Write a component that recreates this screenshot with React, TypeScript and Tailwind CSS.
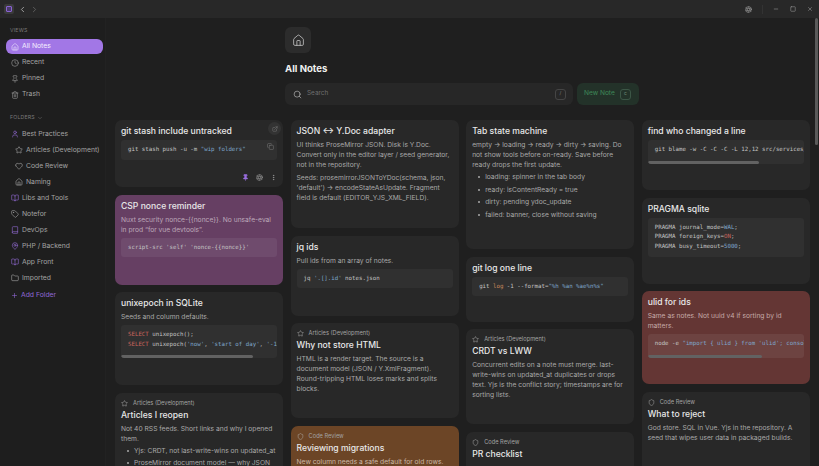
import type { ReactNode } from "react";
import {
  Home, Clock, Pin, Trash2, ChevronDown, ChevronLeft, ChevronRight, User, Star, Heart, BookOpen, Tag, Book, MapPin,
  Folder, Plus, Search, Aperture, Minus, Square, X, ExternalLink, Copy, MoreVertical, Shield,
} from "lucide-react";

const views = [
  { label: "Recent", icon: Clock },
  { label: "Pinned", icon: Pin },
  { label: "Trash", icon: Trash2 },
];

const folders = [
  { label: "Best Practices", icon: User, purple: true },
  { label: "Articles (Development)", icon: Star, sub: true },
  { label: "Code Review", icon: Heart, sub: true },
  { label: "Naming", icon: Home, sub: true },
  { label: "Libs and Tools", icon: BookOpen, purple: true },
  { label: "Notefor", icon: Tag },
  { label: "DevOps", icon: Book, purple: true },
  { label: "PHP / Backend", icon: MapPin, purple: true },
  { label: "App Front", icon: BookOpen, purple: true },
  { label: "Imported", icon: Folder },
];

function Card({ h, tone = "bg-[#282828]", tag, title, children }: { h: string; tone?: string; tag?: "articles" | "review"; title: string; children?: ReactNode }) {
  const TagIcon = tag === "articles" ? Star : Shield;
  return (
    <div className={`relative shrink-0 overflow-hidden rounded-[7px] px-[6px] pt-[5px] ${h} ${tone}`}>
      {tag && (
        <div className="mb-[1px] mt-[1px] flex h-[9px] items-center gap-[4px] text-[5.7px] text-[#a3a3a3]">
          <TagIcon size={7} strokeWidth={1.6} className="text-[#bdbdbd]" />
          <span className="ml-[1px]">{tag === "articles" ? "Articles (Development)" : "Code Review"}</span>
        </div>
      )}
      <h3 className="text-[8.6px] font-medium leading-[12px] text-[#e8e8e8]">{title}</h3>
      {children}
    </div>
  );
}

function Body({ children, dim = "text-[#a8a8a8]" }: { children: ReactNode; dim?: string }) {
  return <p className={`mt-[3px] text-[6.7px] leading-[10px] ${dim}`}>{children}</p>;
}

function Code({ lines, bg = "bg-[#303030]", thumb, h = "" }: { lines: ReactNode[]; bg?: string; thumb?: string; h?: string }) {
  return (
    <div className={`relative mt-[3px] overflow-hidden whitespace-pre rounded-[3px] py-[5px] pl-[7px] font-['DejaVu_Sans_Mono',monospace] text-[5.75px] leading-[9.7px] text-[#c4c4c4] ${bg} ${h}`}>
      {lines.map((l, i) => (
        <div key={i}>{l}</div>
      ))}
      {thumb && <div className={`absolute bottom-0 left-0 h-[3px] rounded-full bg-[#626262] ${thumb}`} />}
    </div>
  );
}

const S = ({ children }: { children: ReactNode }) => <span className="text-[#7fa7cc]">{children}</span>;
const R = ({ children }: { children: ReactNode }) => <span className="text-[#c9645c]">{children}</span>;

function Bullets({ items }: { items: string[] }) {
  return (
    <ul className="mt-[1px] pl-[6px] text-[6.7px] text-[#a8a8a8]">
      {items.map((t) => (
        <li key={t} className="flex h-[12.6px] items-center">
          <span className="mr-[5px] h-[2px] w-[2px] rounded-full bg-[#a8a8a8]" />
          {t}
        </li>
      ))}
    </ul>
  );
}

export default function App() {
  return (
    <div className="flex h-[466px] w-[819px] flex-col overflow-hidden bg-[#1f1f1f] font-['Inter',sans-serif]">
      {/* Title bar */}
      <div className="flex h-[18px] shrink-0 items-center bg-[#282828] text-[#a5a5a5]">
        <div className="ml-[4px] flex h-[10px] w-[10px] items-center justify-center rounded-[2px] bg-[#3a3a3a]">
          <div className="h-[6px] w-[6px] rounded-[1px] border border-[#8a63d2] bg-[#4a3a6b]" />
        </div>
        <ChevronLeft size={9} strokeWidth={2} className="ml-[4px] text-[#bdbdbd]" />
        <ChevronRight size={9} strokeWidth={2} className="ml-[3px] text-[#6b6b6b]" />
        <div className="ml-auto flex items-center">
          <Aperture size={7} strokeWidth={1.8} />
          <div className="ml-[10px] h-[9px] w-px bg-[#333333]" />
          <Minus size={6} strokeWidth={2} className="ml-[10px]" />
          <Square size={6} strokeWidth={2} className="ml-[11px]" />
          <X size={6} strokeWidth={2} className="ml-[11px] mr-[6px]" />
        </div>
      </div>

      <div className="flex min-h-0 flex-1">
        {/* Sidebar */}
        <aside className="w-[106px] shrink-0 border-r border-[#222222] bg-[#1e1e1e] pl-[6px] pr-[2px] pt-[9px]">
          <div className="pl-[4px] text-[5.2px] leading-[7px] tracking-[0.2px] text-[#7a7a7a]">VIEWS</div>
          <div className="mt-[5px] flex h-[15px] items-center rounded-[6px] bg-[#a277e6] pl-[5px] text-[6.8px] text-[#f5f0ff]">
            <Home size={8} strokeWidth={1.7} className="mr-[3px]" />
            All Notes
          </div>
          {views.map((v) => (
            <div key={v.label} className="mt-px flex h-[15px] items-center pl-[5px] text-[6.8px] text-[#a3a3a3]">
              <v.icon size={8} strokeWidth={1.7} className="mr-[3px]" />
              {v.label}
            </div>
          ))}
          <div className="mt-[12px] flex h-[7px] items-center pl-[4px] text-[5.2px] tracking-[0.2px] text-[#7a7a7a]">
            FOLDERS
            <ChevronDown size={6} strokeWidth={1.8} className="ml-[2px]" />
          </div>
          <div className="mt-[5px]">
            {folders.map((f) => (
              <div key={f.label} className={`flex h-[16px] items-center text-[6.8px] text-[#a3a3a3] ${f.sub ? "pl-[9px]" : "pl-[5px]"}`}>
                <f.icon size={8} strokeWidth={1.7} className={`mr-[3px] ${f.purple ? "text-[#9a6fdf]" : "text-[#b0b0b0]"}`} />
                {f.label}
              </div>
            ))}
          </div>
          <div className="mt-[1px] flex h-[16px] items-center pl-[5px] text-[6.8px] text-[#9068d6]">
            <Plus size={7} strokeWidth={2} className="mr-[3px]" />
            Add Folder
          </div>
        </aside>

        {/* Main */}
        <main className="relative min-w-0 flex-1">
          <div className="pl-[179px] pt-[9px]">
            <div className="flex h-[26px] w-[26px] items-center justify-center rounded-[6px] bg-[#2c2c2c] text-[#c4c4c4]">
              <Home size={13} strokeWidth={1.5} />
            </div>
            <h1 className="mt-[9px] text-[9.6px] font-bold leading-[13px] text-[#f0f0f0]">All Notes</h1>
            <div className="mt-[8px] flex gap-[4px]">
              <div className="flex h-[22px] w-[288px] items-center rounded-[6px] bg-[#272727] pl-[8px] pr-[7px]">
                <Search size={9} strokeWidth={1.8} className="text-[#b5b5b5]" />
                <span className="ml-[5px] text-[6.4px] text-[#6f6f6f]">Search</span>
                <span className="ml-auto flex h-[11px] w-[11px] items-center justify-center rounded-[3px] border border-[#454545] text-[5px] text-[#7a7a7a]">/</span>
              </div>
              <div className="flex h-[22px] w-[62px] items-center rounded-[6px] bg-[#233229] pl-[7px] text-[6.6px] text-[#3e8a58]">
                New Note
                <span className="ml-[5px] flex h-[11px] w-[11px] items-center justify-center rounded-[3px] border border-[#3c5646] text-[5px] text-[#6d8a76]">c</span>
              </div>
            </div>
          </div>

          <div className="mt-[15px] grid grid-cols-4 gap-x-[7.3px] pl-[9px] pr-[9px]">
            <div className="flex flex-col gap-[7.5px]">
              <Card h="h-[67px]" title="git stash include untracked">
                <div className="absolute right-[2px] top-[2px] flex h-[13px] w-[13px] items-center justify-center rounded-full bg-[#333333]">
                  <ExternalLink size={6} strokeWidth={1.6} className="text-[#8a8a8a]" />
                </div>
                <Code lines={[<>git stash push -u -m <S>"wip folders"</S></>]} />
                <Copy size={7} strokeWidth={1.5} className="absolute right-[9px] top-[23px] text-[#8a8a8a]" />
                <div className="absolute bottom-[6px] right-[6px] flex items-center text-[#a8a8a8]">
                  <Pin size={7} strokeWidth={2} className="fill-[#9a6fdf] text-[#9a6fdf]" />
                  <Aperture size={7} strokeWidth={1.6} className="ml-[7px]" />
                  <MoreVertical size={7} strokeWidth={2} className="ml-[7px]" />
                </div>
              </Card>
              <Card h="h-[90px]" tone="bg-[#663f63]" title="CSP nonce reminder">
                <Body dim="text-[#bda9ba]">Nuxt security nonce-{"{{nonce}}"}. No unsafe-eval in prod “for vue devtools”.</Body>
                <Code bg="bg-[#6f4b6d]" lines={["script-src 'self' 'nonce-{{nonce}}'"]} />
              </Card>
              <Card h="h-[93px]" title="unixepoch in SQLite">
                <Body>Seeds and column defaults.</Body>
                <Code
                  h="h-[33px]"
                  thumb="w-[132px]"
                  lines={[
                    <><R>SELECT</R> unixepoch();</>,
                    <><R>SELECT</R> unixepoch(<S>'now'</S>, <S>'start of day'</S>, <S>'-1 day'</S>);</>,
                  ]}
                />
              </Card>
              <Card h="h-[120px]" tag="articles" title="Articles I reopen">
                <Body>Not 40 RSS feeds. Short links and why I opened them.</Body>
                <Bullets items={["Yjs: CRDT, not last-write-wins on updated_at", "ProseMirror document model — why JSON"]} />
              </Card>
            </div>

            <div className="flex flex-col gap-[7.5px]">
              <Card h="h-[108px]" title="JSON ↔ Y.Doc adapter">
                <Body>UI thinks ProseMirror JSON. Disk is Y.Doc. Convert only in the editor layer / seed generator, not in the repository.</Body>
                <Body>Seeds: prosemirrorJSONToYDoc(schema, json, 'default') → encodeStateAsUpdate. Fragment field is default (EDITOR_YJS_XML_FIELD).</Body>
              </Card>
              <Card h="h-[80px]" title="jq ids">
                <Body>Pull ids from an array of notes.</Body>
                <Code lines={[<>jq <S>'.[].id'</S> notes.json</>]} />
              </Card>
              <Card h="h-[95px]" tag="articles" title="Why not store HTML">
                <Body>HTML is a render target. The source is a document model (JSON / Y.XmlFragment). Round-tripping HTML loses marks and splits blocks.</Body>
              </Card>
              <Card h="h-[60px]" tone="bg-[#6c4526]" tag="review" title="Reviewing migrations">
                <Body dim="text-[#cbb8a6]">New column needs a safe default for old rows. No</Body>
              </Card>
            </div>

            <div className="flex flex-col gap-[7.5px]">
              <Card h="h-[129px]" title="Tab state machine">
                <Body>empty → loading → ready → dirty → saving. Do not show tools before on-ready. Save before ready drops the first update.</Body>
                <Bullets items={["loading: spinner in the tab body", "ready: isContentReady = true", "dirty: pending ydoc_update", "failed: banner, close without saving"]} />
              </Card>
              <Card h="h-[65px]" title="git log one line">
                <Code lines={[<>git <span className="text-[#c98a5c]">log</span> -1 --format=<S>"%h %an %ae%n%s"</S></>]} />
              </Card>
              <Card h="h-[95px]" tag="articles" title="CRDT vs LWW">
                <Body>Concurrent edits on a note must merge. last-write-wins on updated_at duplicates or drops text. Yjs is the conflict story; timestamps are for sorting lists.</Body>
              </Card>
              <Card h="h-[60px]" tag="review" title="PR checklist" />
            </div>

            <div className="flex flex-col gap-[7.5px]">
              <Card h="h-[70px]" title="find who changed a line">
                <Code thumb="w-[111px]" h="h-[24px]" lines={["git blame -w -C -C -C -L 12,12 src/services/notes.ts"]} />
              </Card>
              <Card h="h-[86px]" title="PRAGMA sqlite">
                <Code
                  lines={[
                    <>PRAGMA journal_mode=<S>WAL</S>;</>,
                    <>PRAGMA foreign_keys=<R>ON</R>;</>,
                    <>PRAGMA busy_timeout=<S>5000</S>;</>,
                  ]}
                />
              </Card>
              <Card h="h-[93px]" tone="bg-[#643634]" title="ulid for ids">
                <Body dim="text-[#c4aaa8]">Same as notes. Not uuid v4 if sorting by id matters.</Body>
                <Code
                  bg="bg-[#6d4341]"
                  h="h-[24px]"
                  thumb="w-[114px]"
                  lines={[<>node -e <S>"import {"{"} ulid {"}"} from 'ulid'; console.log(ulid())"</S></>]}
                />
              </Card>
              <Card h="h-[80px]" tag="review" title="What to reject">
                <Body>God store. SQL in Vue. Yjs in the repository. A seed that wipes user data in packaged builds.</Body>
              </Card>
            </div>
          </div>

          <div className="absolute right-[1px] top-0 h-[127px] w-[3px] rounded-full bg-[#5a5a5a]" />
        </main>
      </div>
    </div>
  );
}
